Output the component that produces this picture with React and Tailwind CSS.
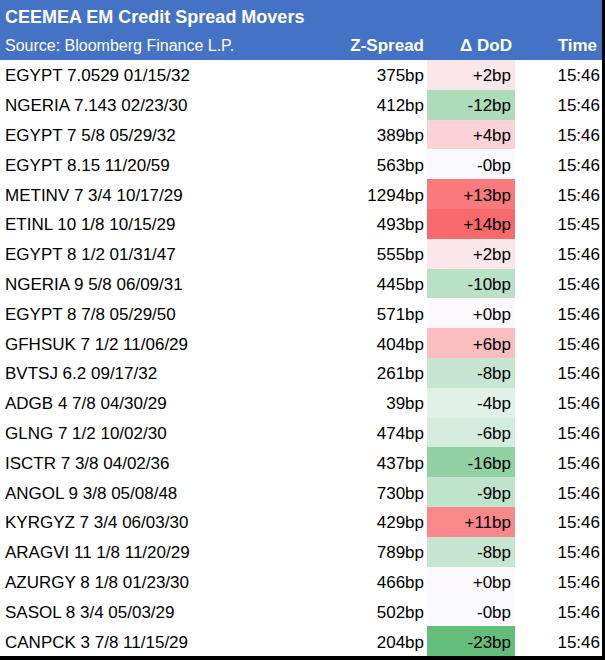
import React from "react";

const rows = [
  { name: "EGYPT 7.0529 01/15/32", z: "375bp", d: "+2bp", bg: "bg-[#fbe7ea]", t: "15:46" },
  { name: "NGERIA 7.143 02/23/30", z: "412bp", d: "-12bp", bg: "bg-[#acdcba]", t: "15:46" },
  { name: "EGYPT 7 5/8 05/29/32", z: "389bp", d: "+4bp", bg: "bg-[#fbd2d5]", t: "15:46" },
  { name: "EGYPT 8.15 11/20/59", z: "563bp", d: "-0bp", bg: "bg-[#fafafe]", t: "15:46" },
  { name: "METINV 7 3/4 10/17/29", z: "1294bp", d: "+13bp", bg: "bg-[#f87a7c]", t: "15:46" },
  { name: "ETINL 10 1/8 10/15/29", z: "493bp", d: "+14bp", bg: "bg-[#f8696b]", t: "15:45" },
  { name: "EGYPT 8 1/2 01/31/47", z: "555bp", d: "+2bp", bg: "bg-[#fbe7ea]", t: "15:46" },
  { name: "NGERIA 9 5/8 06/09/31", z: "445bp", d: "-10bp", bg: "bg-[#b9e1c6]", t: "15:46" },
  { name: "EGYPT 8 7/8 05/29/50", z: "571bp", d: "+0bp", bg: "bg-[#fcf8fb]", t: "15:46" },
  { name: "GFHSUK 7 1/2 11/06/29", z: "404bp", d: "+6bp", bg: "bg-[#fabdc0]", t: "15:46" },
  { name: "BVTSJ 6.2 09/17/32", z: "261bp", d: "-8bp", bg: "bg-[#c7e6d1]", t: "15:46" },
  { name: "ADGB 4 7/8 04/30/29", z: "39bp", d: "-4bp", bg: "bg-[#e1f1e8]", t: "15:46" },
  { name: "GLNG 7 1/2 10/02/30", z: "474bp", d: "-6bp", bg: "bg-[#d4ecdd]", t: "15:46" },
  { name: "ISCTR 7 3/8 04/02/36", z: "437bp", d: "-16bp", bg: "bg-[#92d1a3]", t: "15:46" },
  { name: "ANGOL 9 3/8 05/08/48", z: "730bp", d: "-9bp", bg: "bg-[#c0e4cb]", t: "15:46" },
  { name: "KYRGYZ 7 3/4 06/03/30", z: "429bp", d: "+11bp", bg: "bg-[#f9888b]", t: "15:46" },
  { name: "ARAGVI 11 1/8 11/20/29", z: "789bp", d: "-8bp", bg: "bg-[#c7e6d1]", t: "15:46" },
  { name: "AZURGY 8 1/8 01/23/30", z: "466bp", d: "+0bp", bg: "bg-[#fcf8fb]", t: "15:46" },
  { name: "SASOL 8 3/4 05/03/29", z: "502bp", d: "-0bp", bg: "bg-[#fafafe]", t: "15:46" },
  { name: "CANPCK 3 7/8 11/15/29", z: "204bp", d: "-23bp", bg: "bg-[#63be7b]", t: "15:46" },
];

export default function App() {
  return (
    <div className="w-[605px] h-[660px] bg-white font-['Liberation_Sans',sans-serif] text-black">
      <div className="w-[605px] h-[660px] border-r-[3px] border-b-[4px] border-black flex flex-col">
        {/* header */}
        <div className="bg-[#4472c4] text-white h-[60px]">
          <div className="h-[32px] pl-[5px] pt-[7px] text-[18px] font-bold leading-[21px]">
            CEEMEA EM Credit Spread Movers
          </div>
          <div className="h-[28px] grid grid-cols-[427px_88px_87px] items-center text-[17px] leading-[20px]">
            <div className="flex justify-between items-baseline pl-[5px] pr-[3px]">
              <span className="text-[16px]">Source: Bloomberg Finance L.P.</span>
              <span className="font-bold">Z-Spread</span>
            </div>
            <div className="text-right pr-[3px] font-bold">Δ DoD</div>
            <div className="text-right pr-[5px] font-bold">Time</div>
          </div>
        </div>
        {/* rows */}
        {rows.map((r) => (
          <div
            key={r.name}
            className="h-[29.8px] grid grid-cols-[427px_88px_87px] items-stretch text-[17px] leading-[20px]"
          >
            <div className="flex justify-between items-center pl-[5px] pr-[3px] pt-[3px]">
              <span>{r.name}</span>
              <span>{r.z}</span>
            </div>
            <div className={`flex items-center justify-end pr-[4px] pt-[3px] ${r.bg}`}>{r.d}</div>
            <div className="flex items-center justify-end pr-[2px] pt-[3px]">{r.t}</div>
          </div>
        ))}
      </div>
    </div>
  );
}
